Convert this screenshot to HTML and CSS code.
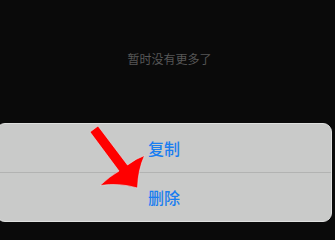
FILE: index.html
```html
<!DOCTYPE html>
<html>
<head>
<meta charset="utf-8">
<link rel="stylesheet" href="styles.css">
</head>
<body>
<div class="page">
  <div class="empty">暂时没有更多了</div>
  <div class="sheet">
    <div class="item">复制</div>
    <div class="divider"></div>
    <div class="item">删除</div>
  </div>
  <svg class="arrow" width="335" height="229" viewBox="0 0 335 229">
    <path d="M90 132 L98 126 L127.5 165 Q136 158.5 144.5 155.5 Q138 170 137.5 188 Q119 182.5 100 185.5 Q110 176 119 171 Z" fill="#ff0000" stroke="#d8eeee" stroke-width="0.6" stroke-linejoin="miter"/>
  </svg>
</div>
</body>
</html>
```
FILE: styles.css
```css
html, body {
  margin: 0;
  padding: 0;
  background: #0a0a0a;
}
.page {
  position: relative;
  width: 335px;
  height: 229px;
  overflow: hidden;
  display: flex;
  flex-direction: column;
  font-family: "Noto Sans CJK SC", "Noto Sans", sans-serif;
}
.empty {
  margin-top: 50px;
  height: 17px;
  line-height: 17px;
  font-size: 12px;
  color: #575757;
  text-align: center;
  padding-left: 0;
  padding-right: 0;
  margin-left: 2px;
  margin-right: -2px;
}
.sheet {
  margin-top: 56px;
  margin-left: -4px;
  width: 334px;
  background: #c9cac9;
  border: 1px solid #dfe0df;
  border-radius: 9px;
  display: flex;
  flex-direction: column;
}
.item {
  height: 48px;
  display: flex;
  align-items: center;
  justify-content: center;
  font-size: 16px;
  color: #1b7ef0;
  font-weight: 500;
}
.divider {
  height: 1px;
  background: #b2b3b2;
}
.arrow {
  position: absolute;
  left: 0;
  top: 0;
}
```
